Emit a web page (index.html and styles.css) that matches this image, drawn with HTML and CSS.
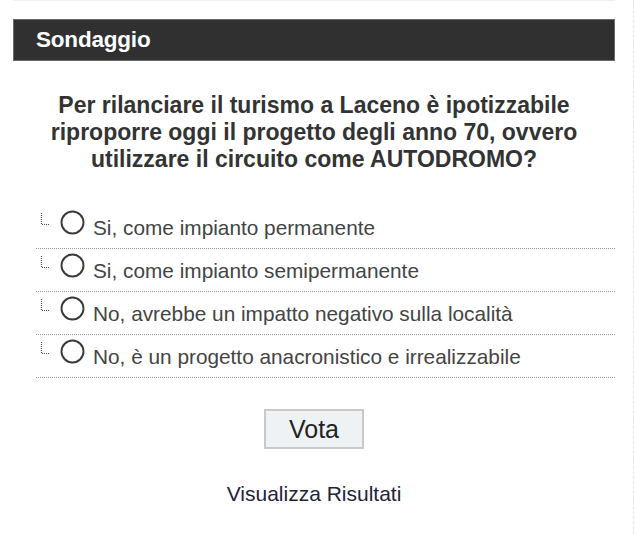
FILE: index.html
```html
<!DOCTYPE html>
<html lang="it">
<head>
<meta charset="utf-8">
<title>Sondaggio</title>
<link rel="stylesheet" href="styles.css">
</head>
<body>
<div class="page">
  <div class="poll">
    <div class="poll-header">Sondaggio</div>
    <div class="question">Per rilanciare il turismo a Laceno è ipotizzabile riproporre oggi il progetto degli anno 70, ovvero utilizzare il circuito come AUTODROMO?</div>
    <ul class="options">
      <li class="option">
        <svg class="tree" width="10" height="13" viewBox="0 0 10 13"><path d="M1.5 0V11.5H10" fill="none" stroke="#555" stroke-width="1.2" stroke-dasharray="1 1"/></svg>
        <svg class="radio" width="25" height="25" viewBox="0 0 25 25"><circle cx="12.5" cy="12.5" r="11" fill="#fff" stroke="#3a3a3a" stroke-width="1.9"/></svg>
        <span class="label">Si, come impianto permanente</span>
      </li>
      <li class="option">
        <svg class="tree" width="10" height="13" viewBox="0 0 10 13"><path d="M1.5 0V11.5H10" fill="none" stroke="#555" stroke-width="1.2" stroke-dasharray="1 1"/></svg>
        <svg class="radio" width="25" height="25" viewBox="0 0 25 25"><circle cx="12.5" cy="12.5" r="11" fill="#fff" stroke="#3a3a3a" stroke-width="1.9"/></svg>
        <span class="label">Si, come impianto semipermanente</span>
      </li>
      <li class="option">
        <svg class="tree" width="10" height="13" viewBox="0 0 10 13"><path d="M1.5 0V11.5H10" fill="none" stroke="#555" stroke-width="1.2" stroke-dasharray="1 1"/></svg>
        <svg class="radio" width="25" height="25" viewBox="0 0 25 25"><circle cx="12.5" cy="12.5" r="11" fill="#fff" stroke="#3a3a3a" stroke-width="1.9"/></svg>
        <span class="label">No, avrebbe un impatto negativo sulla località</span>
      </li>
      <li class="option">
        <svg class="tree" width="10" height="13" viewBox="0 0 10 13"><path d="M1.5 0V11.5H10" fill="none" stroke="#555" stroke-width="1.2" stroke-dasharray="1 1"/></svg>
        <svg class="radio" width="25" height="25" viewBox="0 0 25 25"><circle cx="12.5" cy="12.5" r="11" fill="#fff" stroke="#3a3a3a" stroke-width="1.9"/></svg>
        <span class="label">No, è un progetto anacronistico e irrealizzabile</span>
      </li>
    </ul>
    <div class="actions">
      <button class="vote" type="button">Vota</button>
      <a class="results" href="#">Visualizza Risultati</a>
    </div>
  </div>
</div>
</body>
</html>
```
FILE: styles.css
```css
html, body {
  margin: 0;
  padding: 0;
  background: #fff;
}
body {
  font-family: "Liberation Sans", Arial, sans-serif;
  color: #444;
}
.page {
  width: 634px;
  height: 534px;
  border-right: 1px dashed #e4e4e4;
  box-sizing: border-box;
}
.poll {
  margin-left: 13px;
  width: 602px;
  border-top: 1px solid #f0f0f0;
  padding-top: 18px;
}
.poll-header {
  background: #303030;
  border: 1px solid #6a6a6a;
  height: 40px;
  line-height: 40px;
  padding-left: 22px;
  color: #fff;
  font-weight: bold;
  font-size: 22.5px;
  letter-spacing: -0.2px;
}
.question {
  margin: 31px 0 0;
  padding: 0 30px;
  text-align: center;
  font-weight: bold;
  font-size: 23px;
  line-height: 27px;
  color: #333;
}
.options {
  list-style: none;
  margin: 33px 0 0 23px;
  padding: 0;
}
.option {
  display: flex;
  align-items: flex-start;
  height: 42px;
  border-bottom: 1px dotted #9a9a9a;
  padding-left: 4px;
}
.tree {
  margin-top: 7px;
  flex: none;
}
.radio {
  margin-top: 4px;
  margin-left: 10px;
  flex: none;
}
.label {
  margin-top: 10px;
  margin-left: 8px;
  font-size: 20.8px;
  line-height: 24px;
  color: #444;
  white-space: nowrap;
}
.actions {
  display: flex;
  flex-direction: column;
  align-items: center;
  padding-top: 31px;
}
.vote {
  width: 100px;
  height: 40px;
  background: #eff2f5;
  border: 2px solid #c9c9c9;
  border-radius: 0;
  font-family: "Liberation Sans", Arial, sans-serif;
  font-size: 25px;
  color: #222;
  padding: 0;
  margin: 0;
}
.results {
  margin-top: 33px;
  font-size: 21px;
  line-height: 24px;
  color: #23233a;
  text-decoration: none;
}
```
